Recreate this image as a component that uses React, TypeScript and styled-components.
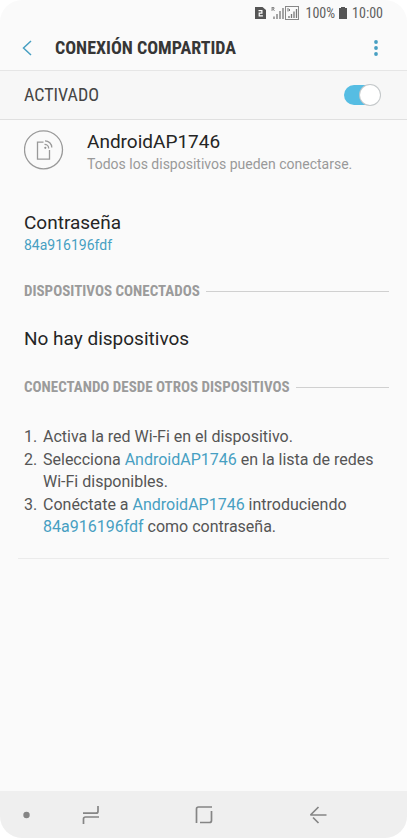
import React from "react";
import styled, { createGlobalStyle } from "styled-components";

const GlobalStyle = createGlobalStyle`
  *, *::before, *::after { box-sizing: border-box; }
  body { margin: 0; background: #fff; font-family: Roboto, sans-serif; color: #252525; }
  h1, h2, p, ol { margin: 0; padding: 0; }
  button { padding: 0; border: 0; background: none; color: inherit; cursor: pointer; }
`;

const condensed = `"Roboto Condensed", "Liberation Sans Narrow", Roboto, sans-serif`;

const Screen = styled.div`
  min-height: 100vh;
  display: flex;
  flex-direction: column;
  background: #fafafa;
  border-radius: 22px;
  overflow: hidden;
`;

const StatusBar = styled.div`
  height: 26px;
  display: flex;
  align-items: center;
  justify-content: flex-end;
  padding-right: 24px;
  gap: 4px;
  font: 400 14px ${condensed};
  color: #5f5f5f;
`;

const StatusIcons = styled.svg`
  display: block;
  flex: none;
`;

const Header = styled.header`
  height: 45px;
  display: flex;
  align-items: center;
  padding: 0 21px 0 17px;
  gap: 18px;
  border-bottom: 1px solid #e6e6e6;
`;

const IconButton = styled.button`
  width: 20px;
  height: 32px;
  display: grid;
  place-items: center;
  flex: none;
`;

const Title = styled.h1`
  flex: 1;
  font: 700 18px/24px ${condensed};
  color: #363636;
`;

const MasterRow = styled.label`
  height: 49px;
  display: flex;
  align-items: center;
  justify-content: space-between;
  padding: 0 27px 0 24px;
  background: #f7f7f7;
  border-bottom: 1px solid #e0e0e0;
  font: 400 18px/24px ${condensed};
  color: #454545;
`;

const Switch = styled.input`
  appearance: none;
  width: 36px;
  height: 20px;
  margin: 0;
  display: flex;
  align-items: center;
  justify-content: flex-end;
  border-radius: 10px;
  background: #56bde3;
  &::before {
    content: "";
    width: 20px;
    height: 20px;
    border-radius: 50%;
    background: #fff;
    box-shadow: 0 0 0 1px #c4c8ca;
  }
  &:not(:checked) {
    justify-content: flex-start;
    background: #bdbdbd;
  }
`;

const Content = styled.main`
  flex: 1;
  padding: 10px 18px 0 24px;
`;

const Network = styled.section`
  display: flex;
  gap: 23px;
`;

const Emblem = styled.svg`
  flex: none;
  display: block;
`;

const ItemTitle = styled.p`
  font-size: 19px;
  line-height: 24px;
`;

const ItemNote = styled.p<{ $accent?: boolean }>`
  font-size: 14px;
  line-height: 20px;
  color: ${(p) => (p.$accent ? "#479fc2" : "#999")};
`;

const Password = styled.section`
  margin-top: 37px;
`;

const SectionTitle = styled.h2`
  display: flex;
  align-items: center;
  gap: 6px;
  margin: 26px 0 26px;
  font: 700 15px/20px ${condensed};
  color: #9b9b9b;
  &::after {
    content: "";
    flex: 1;
    height: 1px;
    background: #d0d0d0;
  }
`;

const Steps = styled.ol`
  list-style: none;
  counter-reset: step;
  display: grid;
  gap: 1px;
  padding: 3px 0 0;
  font-size: 16px;
  line-height: 22px;
  color: #555;
`;

const Step = styled.li`
  display: flex;
  counter-increment: step;
  &::before {
    content: counter(step) ".";
    width: 19px;
    flex: none;
  }
`;

const Accent = styled.span`
  color: #479fc2;
`;

const Divider = styled.hr`
  margin: 20px 0 0 -6px;
  border: 0;
  height: 1px;
  background: #ebebeb;
`;

const NavBar = styled.nav`
  height: 47px;
  display: grid;
  grid-template-columns: 34px 1fr 1fr 1fr 32px;
  align-items: center;
  background: #efefef;
  color: #858585;
`;

const NavButton = styled.button<{ $end?: boolean }>`
  height: 47px;
  display: grid;
  place-items: center ${(p) => (p.$end ? "end" : "center")};
`;

export default function App() {
  return (
    <>
      <GlobalStyle />
      <Screen>
        <StatusBar>
          <StatusIcons width="46" height="14" viewBox="0 0 46 14" fill="none" aria-hidden="true">
            <path d="M0 1h7.500L11 4v9H0z" fill="#555" />
            <path d="M3.500 4.600h3.400v2.600H4.200v2.600h3.700" stroke="#fff" strokeWidth="1.200" />
            <path d="M17 1v4M17 1.500h2v1.500h-2M18 3l1.500 2" stroke="#777" strokeWidth=".8" />
            <path d="M19 10.500V13M22 8v5M25 5v8M28 2v11" stroke="#777" strokeWidth="1.300" />
            <rect x="30.500" y=".5" width="13" height="13" stroke="#888" />
            <path d="M33 2v3.500M34.500 3v2" stroke="#777" />
            <path d="M34 10v2M36.500 8v4M39 5.500V12M41.500 3v9" stroke="#777" strokeWidth="1.300" />
          </StatusIcons>
          <span>100%</span>
          <StatusIcons width="9" height="12" viewBox="0 0 9 12" aria-hidden="true">
            <path d="M2 0h4v1h2v11H0V1h2z" fill="#555" />
          </StatusIcons>
          <time>10:00</time>
        </StatusBar>

        <Header>
          <IconButton type="button" aria-label="Atrás">
            <svg width="12" height="18" viewBox="0 0 12 18" fill="none" stroke="#479fc2" strokeWidth="1.500">
              <path d="M10 2 2.500 9l7.500 7" />
            </svg>
          </IconButton>
          <Title>CONEXIÓN COMPARTIDA</Title>
          <IconButton type="button" aria-label="Más opciones">
            <svg width="6" height="18" viewBox="0 0 6 18" fill="#479fc2">
              <circle cx="3" cy="3" r="1.900" />
              <circle cx="3" cy="9" r="1.900" />
              <circle cx="3" cy="15" r="1.900" />
            </svg>
          </IconButton>
        </Header>

        <MasterRow>
          ACTIVADO
          <Switch type="checkbox" role="switch" defaultChecked />
        </MasterRow>

        <Content>
          <Network>
            <Emblem width="40" height="40" viewBox="0 0 40 40" fill="none" stroke="#999" strokeWidth="1.300" aria-hidden="true">
              <circle cx="19.500" cy="19.800" r="19" />
              <path d="M19.500 12.200h-6v17h12V20" />
              <path d="M20.500 14.300c2.300 0 4.200 1.800 4.200 4.100M21 10.800c3.700 0 6.800 3 6.800 6.700" />
              <circle cx="21.300" cy="17.800" r="1.100" fill="#929292" stroke="none" />
            </Emblem>
            <div>
              <ItemTitle>AndroidAP1746</ItemTitle>
              <ItemNote>Todos los dispositivos pueden conectarse.</ItemNote>
            </div>
          </Network>

          <Password>
            <ItemTitle>Contraseña</ItemTitle>
            <ItemNote $accent>84a916196fdf</ItemNote>
          </Password>

          <SectionTitle>DISPOSITIVOS CONECTADOS</SectionTitle>
          <ItemTitle>No hay dispositivos</ItemTitle>

          <SectionTitle>CONECTANDO DESDE OTROS DISPOSITIVOS</SectionTitle>
          <Steps>
            <Step>Activa la red Wi-Fi en el dispositivo.</Step>
            <Step>
              <span>
                Selecciona <Accent>AndroidAP1746</Accent> en la lista de redes Wi-Fi disponibles.
              </span>
            </Step>
            <Step>
              <span>
                Conéctate a <Accent>AndroidAP1746</Accent> introduciendo <Accent>84a916196fdf</Accent> como contraseña.
              </span>
            </Step>
          </Steps>
          <Divider />
        </Content>

        <NavBar>
          <NavButton type="button" aria-label="Ocultar barra" $end>
            <svg width="15" height="8" viewBox="0 0 15 8" fill="currentColor">
              <circle cx="7.500" cy="4" r="3.200" />
            </svg>
          </NavButton>
          <NavButton type="button" aria-label="Recientes">
            <svg width="18" height="18" viewBox="0 0 18 18" fill="none" stroke="currentColor" strokeWidth="1.700">
              <path d="M1 7.200h13q2 0 2-2V0M17 11H3.500q-2 0-2 2v5" />
            </svg>
          </NavButton>
          <NavButton type="button" aria-label="Inicio">
            <svg width="18" height="18" viewBox="0 0 18 18" fill="none" stroke="currentColor" strokeWidth="1.700">
              <path d="M1.500 17V3q0-2 2-2H17M16.500 5v9.500q0 2-2 2H5" />
            </svg>
          </NavButton>
          <NavButton type="button" aria-label="Volver">
            <svg width="18" height="18" viewBox="0 0 18 18" fill="none" stroke="currentColor" strokeWidth="1.700">
              <path d="M9.500 1 2 8.500q-.5.500.5.500H17.500M4 11.500 9.500 17" />
            </svg>
          </NavButton>
        </NavBar>
      </Screen>
    </>
  );
}
